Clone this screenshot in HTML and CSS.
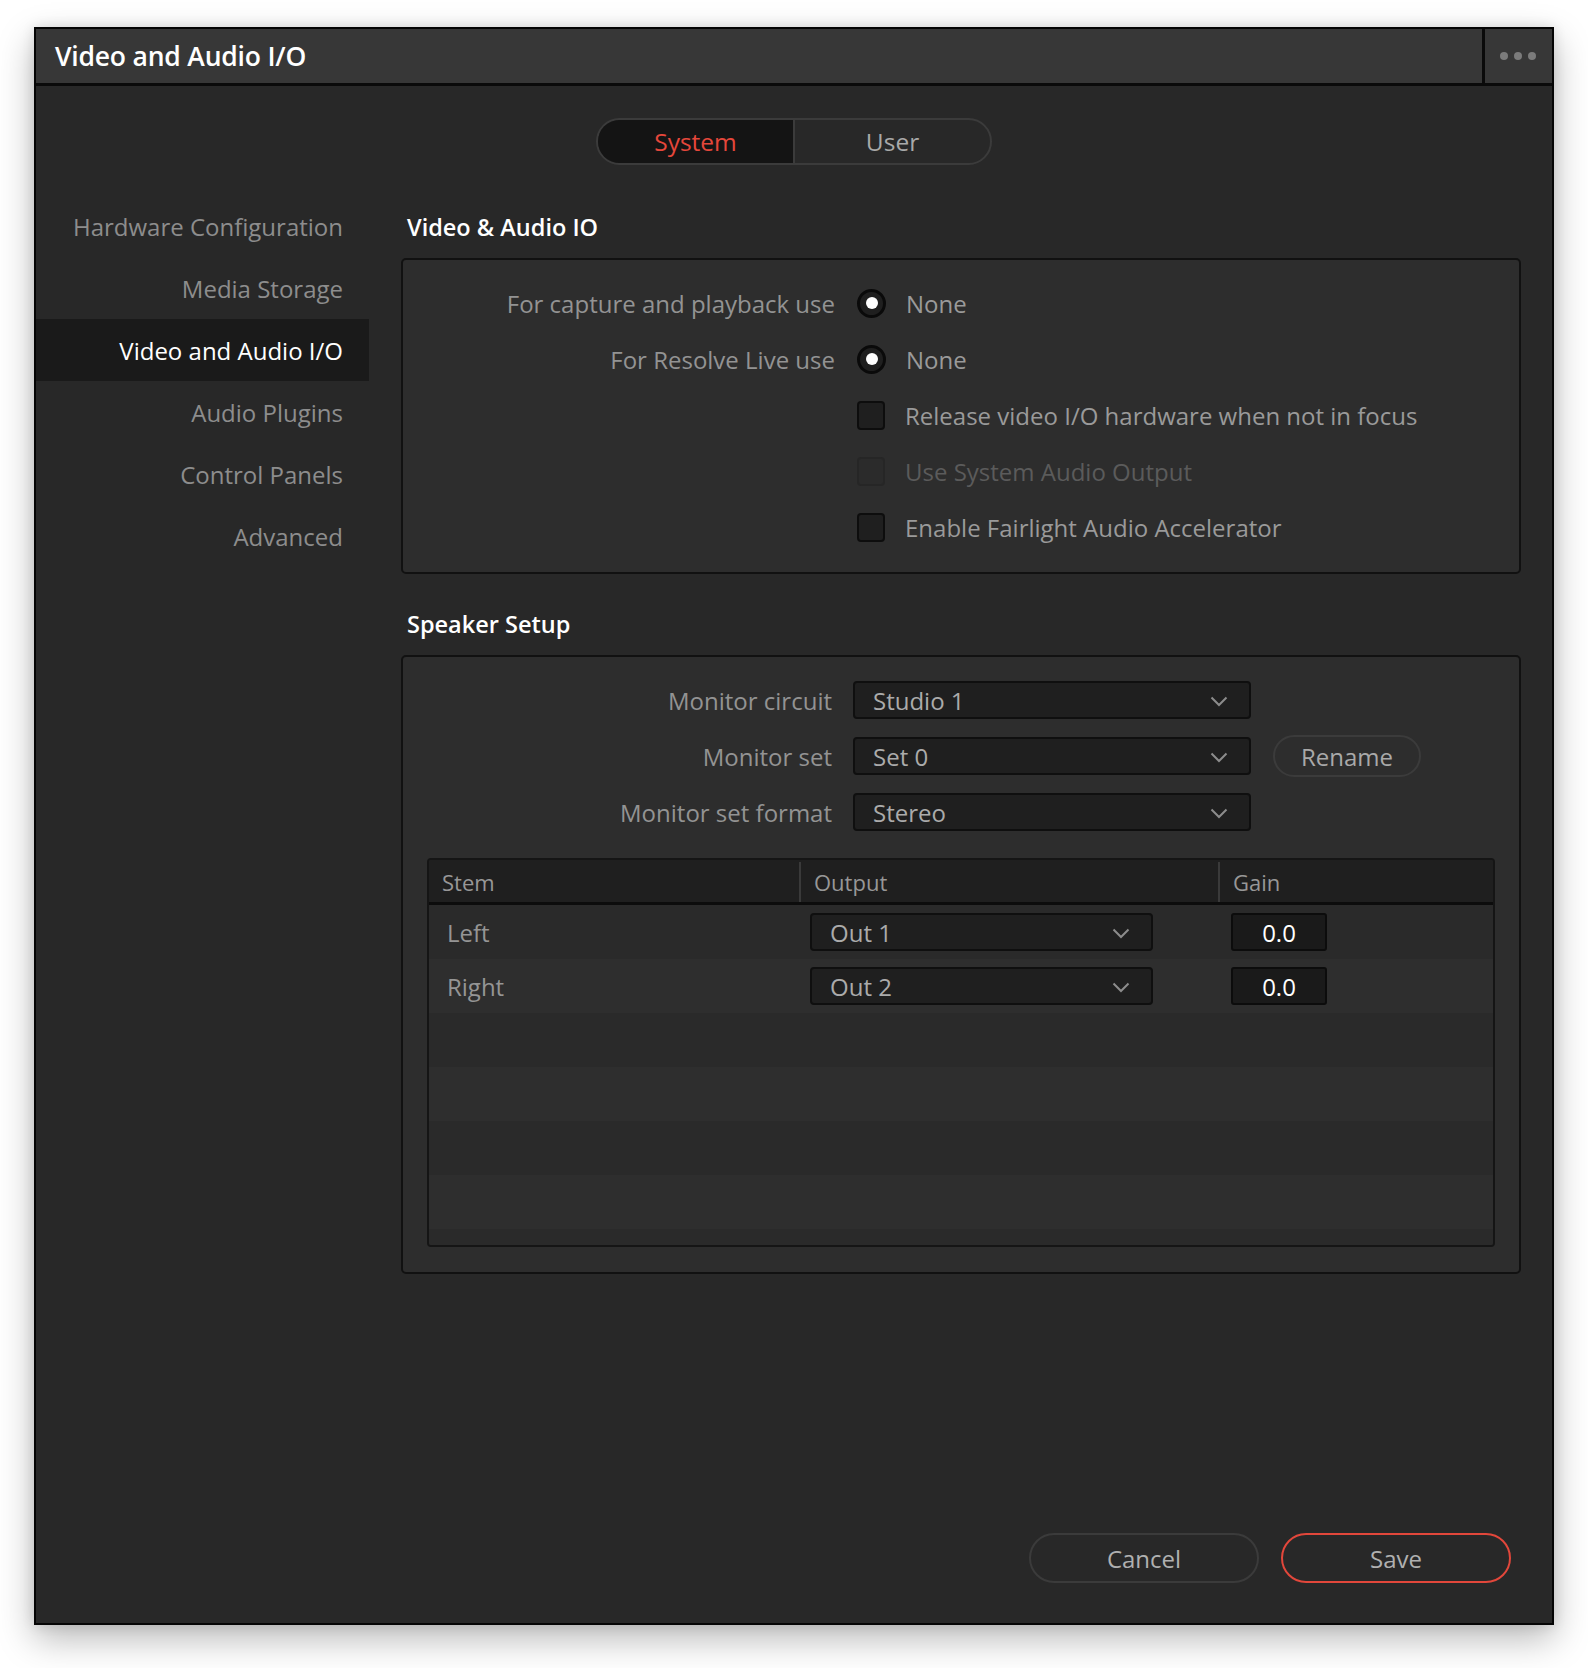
FILE: index.html
```html
<!DOCTYPE html>
<html>
<head>
<meta charset="utf-8">
<title>Video and Audio I/O</title>
<link rel="stylesheet" href="styles.css">
</head>
<body>
<div class="window">
  <div class="titlebar">
    <div class="title">Video and Audio I/O</div>
    <div class="menu"><span class="dot"></span><span class="dot"></span><span class="dot"></span></div>
  </div>
  <div class="body">
    <div class="seg">
      <div class="seg-item active">System</div>
      <div class="seg-item">User</div>
    </div>
    <div class="main">
      <nav class="sidebar">
        <div class="nav-item">Hardware Configuration</div>
        <div class="nav-item">Media Storage</div>
        <div class="nav-item selected">Video and Audio I/O</div>
        <div class="nav-item">Audio Plugins</div>
        <div class="nav-item">Control Panels</div>
        <div class="nav-item">Advanced</div>
      </nav>
      <div class="content">
        <div class="section-title">Video &amp; Audio IO</div>
        <div class="panel panel-io">
          <div class="row">
            <div class="label">For capture and playback use</div>
            <span class="radio"><span class="radio-dot"></span></span>
            <span class="opt">None</span>
          </div>
          <div class="row">
            <div class="label">For Resolve Live use</div>
            <span class="radio"><span class="radio-dot"></span></span>
            <span class="opt">None</span>
          </div>
          <div class="row">
            <div class="label"></div>
            <span class="check"></span>
            <span class="opt">Release video I/O hardware when not in focus</span>
          </div>
          <div class="row">
            <div class="label"></div>
            <span class="check disabled"></span>
            <span class="opt disabled">Use System Audio Output</span>
          </div>
          <div class="row">
            <div class="label"></div>
            <span class="check"></span>
            <span class="opt">Enable Fairlight Audio Accelerator</span>
          </div>
        </div>

        <div class="section-title spaced">Speaker Setup</div>
        <div class="panel panel-speaker">
          <div class="row">
            <div class="label narrow">Monitor circuit</div>
            <div class="select wide"><span>Studio 1</span>
              <svg class="chev" width="18" height="11" viewBox="0 0 18 11"><polyline points="1.5,1.5 9,9 16.5,1.5" fill="none" stroke="#8c8c8c" stroke-width="2"/></svg>
            </div>
          </div>
          <div class="row">
            <div class="label narrow">Monitor set</div>
            <div class="select wide"><span>Set 0</span>
              <svg class="chev" width="18" height="11" viewBox="0 0 18 11"><polyline points="1.5,1.5 9,9 16.5,1.5" fill="none" stroke="#8c8c8c" stroke-width="2"/></svg>
            </div>
            <button class="pill rename">Rename</button>
          </div>
          <div class="row">
            <div class="label narrow">Monitor set format</div>
            <div class="select wide"><span>Stereo</span>
              <svg class="chev" width="18" height="11" viewBox="0 0 18 11"><polyline points="1.5,1.5 9,9 16.5,1.5" fill="none" stroke="#8c8c8c" stroke-width="2"/></svg>
            </div>
          </div>

          <div class="table">
            <div class="thead">
              <div class="th">Stem</div>
              <div class="th">Output</div>
              <div class="th last">Gain</div>
            </div>
            <div class="tbody">
              <div class="tr">
                <div class="td stem">Left</div>
                <div class="td"><div class="select out"><span>Out 1</span>
                  <svg class="chev" width="18" height="11" viewBox="0 0 18 11"><polyline points="1.5,1.5 9,9 16.5,1.5" fill="none" stroke="#8c8c8c" stroke-width="2"/></svg>
                </div></div>
                <div class="td"><div class="gain">0.0</div></div>
              </div>
              <div class="tr alt">
                <div class="td stem">Right</div>
                <div class="td"><div class="select out"><span>Out 2</span>
                  <svg class="chev" width="18" height="11" viewBox="0 0 18 11"><polyline points="1.5,1.5 9,9 16.5,1.5" fill="none" stroke="#8c8c8c" stroke-width="2"/></svg>
                </div></div>
                <div class="td"><div class="gain">0.0</div></div>
              </div>
              <div class="tr"></div>
              <div class="tr alt"></div>
              <div class="tr"></div>
              <div class="tr alt"></div>
              <div class="tr"></div>
            </div>
          </div>
        </div>
      </div>
    </div>
    <div class="footer">
      <button class="pill action">Cancel</button>
      <button class="pill action primary">Save</button>
    </div>
  </div>
</div>
</body>
</html>
```

FILE: styles.css
```css
* { box-sizing: border-box; }

html, body {
  margin: 0;
  padding: 0;
  background: #ffffff;
}

body {
  font-family: "Open Sans", "Liberation Sans", sans-serif;
  font-size: 24px;
  color: #959595;
  padding: 27px 0 0 34px;
  height: 1668px;
}

.window {
  width: 1520px;
  height: 1598px;
  border: 2px solid #050505;
  background: #282828;
  display: flex;
  flex-direction: column;
  box-shadow: 0 14px 34px rgba(0, 0, 0, 0.28), 0 0 12px rgba(0, 0, 0, 0.12);
}

/* Title bar */
.titlebar {
  height: 57px;
  flex: none;
  display: flex;
  background: #373737;
  border-bottom: 3px solid #0a0a0a;
}

.title {
  flex: 1;
  display: flex;
  align-items: center;
  padding-left: 19px;
  color: #ffffff;
  font-size: 26.5px;
  font-weight: 600;
  letter-spacing: -0.2px;
}

.menu {
  width: 70px;
  border-left: 3px solid #0a0a0a;
  display: flex;
  align-items: center;
  justify-content: center;
  gap: 6px;
  padding-right: 2px;
}

.dot {
  width: 8px;
  height: 8px;
  border-radius: 50%;
  background: #7b7b7b;
}

/* Body */
.body {
  flex: 1;
  display: flex;
  flex-direction: column;
}

.seg {
  align-self: center;
  margin-top: 32px;
  width: 396px;
  height: 47px;
  border: 2px solid #3b3b3b;
  border-radius: 24px;
  overflow: hidden;
  display: flex;
}

.seg-item {
  flex: 1;
  display: flex;
  align-items: center;
  justify-content: center;
  color: #a9a9a9;
  font-size: 24.5px;
}

.seg-item + .seg-item {
  border-left: 2px solid #3b3b3b;
}

.seg-item.active {
  background: #141414;
  color: #e5473b;
}

.main {
  display: flex;
  margin-top: 31px;
}

/* Sidebar */
.sidebar {
  width: 333px;
  flex: none;
}

.nav-item {
  height: 62px;
  display: flex;
  align-items: center;
  justify-content: flex-end;
  padding-right: 26px;
  color: #8d8d8d;
  font-size: 24px;
}

.nav-item:first-child {
  margin-top: -1px;
}

.nav-item.selected {
  background: #1a1a1a;
  color: #ffffff;
}

/* Content */
.content {
  flex: 1;
  margin-left: 32px;
  margin-right: 31px;
}

.section-title {
  height: 62px;
  display: flex;
  align-items: center;
  padding-left: 6px;
  color: #ffffff;
  font-size: 23.5px;
  font-weight: 600;
}

.section-title.spaced {
  margin-top: 19px;
}

.panel {
  border: 2px solid #111111;
  border-radius: 5px;
  background: #2d2d2d;
}

.panel-io {
  padding: 15px 0 17px 0;
}

.panel-speaker {
  padding: 15px 24px 25px 24px;
}

.row {
  height: 56px;
  display: flex;
  align-items: center;
}

.label {
  width: 432px;
  flex: none;
  text-align: right;
  color: #939393;
}

.label.narrow {
  width: 405px;
}

.radio {
  margin-left: 22px;
  width: 29px;
  height: 29px;
  border-radius: 50%;
  border: 3px solid #0a0a0a;
  background: #1f1f1f;
  display: flex;
  align-items: center;
  justify-content: center;
  flex: none;
}

.radio-dot {
  width: 12px;
  height: 12px;
  border-radius: 50%;
  background: #ffffff;
}

.check {
  margin-left: 22px;
  width: 28px;
  height: 29px;
  border-radius: 4px;
  border: 2px solid #0d0d0d;
  background: #1f1f1f;
  flex: none;
}

.check.disabled {
  border-color: #262626;
  background: #2b2b2b;
}

.opt {
  margin-left: 20px;
  color: #9a9a9a;
}

.opt.disabled {
  color: #5b5b5b;
}

/* Selects */
.select {
  height: 38px;
  border: 2px solid #0f0f0f;
  border-radius: 4px;
  background: #1f1f1f;
  display: flex;
  align-items: center;
  padding-left: 18px;
  color: #ababab;
  flex: none;
}

.select.wide {
  width: 398px;
  margin-left: 21px;
}

.select.out {
  width: 343px;
  margin-left: 9px;
}

.chev {
  margin-left: auto;
  margin-right: 21px;
  margin-top: 2px;
}

.pill {
  font-family: "Open Sans", "Liberation Sans", sans-serif;
  font-size: 24px;
  color: #a9a9a9;
  background: transparent;
  border: 2px solid #3b3b3b;
  cursor: default;
  padding: 0;
}

.rename {
  width: 148px;
  height: 42px;
  border-radius: 21px;
  margin-left: 22px;
}

/* Table */
.table {
  margin-top: 18px;
  height: 389px;
  border: 2px solid #151515;
  border-radius: 4px;
  overflow: hidden;
  background: #2a2a2a;
}

.thead {
  display: grid;
  grid-template-columns: 372px 419px 1fr;
  height: 45px;
  background: #1f1f1f;
  border-bottom: 3px solid #0c0c0c;
}

.th {
  display: flex;
  align-items: center;
  padding-left: 13px;
  font-size: 22px;
  color: #979797;
  border-right: 2px solid #3a3a3a;
  margin: 2px 0 0 0;
}

.th.last {
  border-right: none;
}

.tr {
  display: grid;
  grid-template-columns: 372px 419px 1fr;
  height: 54px;
  background: #2a2a2a;
}

.tr.alt {
  background: #2e2e2e;
}

.td {
  display: flex;
  align-items: center;
}

.td.stem {
  padding-left: 18px;
  color: #959595;
}

.gain {
  margin-left: 11px;
  width: 96px;
  height: 38px;
  border: 2px solid #0c0c0c;
  border-radius: 3px;
  background: #1a1a1a;
  color: #ffffff;
  display: flex;
  align-items: center;
  justify-content: center;
}

/* Footer */
.footer {
  margin-top: auto;
  display: flex;
  justify-content: flex-end;
  gap: 22px;
  padding: 0 41px 40px 0;
}

.action {
  width: 230px;
  height: 50px;
  border-radius: 25px;
  color: #b0b0b0;
}

.action.primary {
  border-color: #e2473b;
}
```
